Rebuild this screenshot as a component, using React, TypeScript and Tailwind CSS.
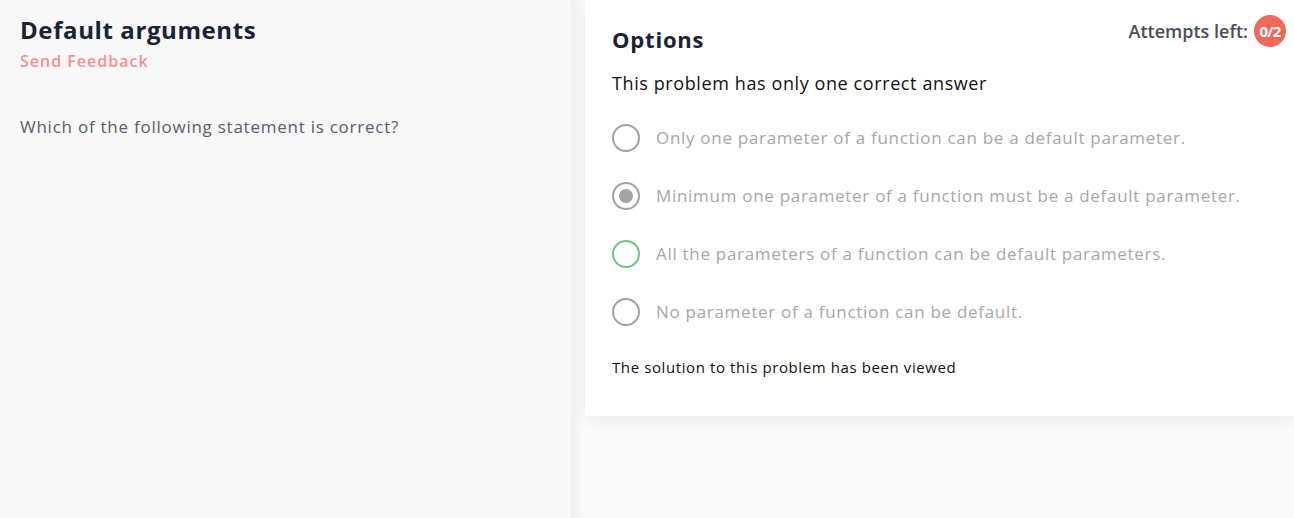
import React from "react";

const options = [
  { text: "Only one parameter of a function can be a default parameter.", state: "none" },
  { text: "Minimum one parameter of a function must be a default parameter.", state: "selected" },
  { text: "All the parameters of a function can be default parameters.", state: "correct" },
  { text: "No parameter of a function can be default.", state: "none" },
];

function Radio({ state }: { state: string }) {
  const ring = state === "correct" ? "border-[#6cc48a]" : "border-[#a3a3a3]";
  return (
    <span className={`w-[28px] h-[28px] rounded-full border-2 ${ring} flex items-center justify-center shrink-0 bg-white`}>
      {state === "selected" && <span className="w-[14px] h-[14px] rounded-full bg-[#a3a3a3]" />}
    </span>
  );
}

export default function App() {
  return (
    <div className="w-[1294px] h-[518px] flex overflow-hidden" style={{ fontFamily: "'Open Sans', Lato, sans-serif" }}>
      {/* question panel */}
      <div className="w-[571px] h-full bg-[#f8f8f8] px-5 pt-[14px]">
        <h1 className="text-[24px] font-bold text-[#1b2233] leading-[32px] tracking-[0.6px]">Default arguments</h1>
        <div className="text-[16px] font-semibold text-[#f59191] tracking-[1px] mt-[3px]">Send Feedback</div>
        <p className="text-[17px] text-[#5a5f6b] mt-[41px] tracking-[0.75px]">Which of the following statement is correct?</p>
      </div>

      {/* options panel */}
      <div className="flex-1 h-full bg-[#fafafa] pl-[14px] shadow-[inset_10px_0_12px_-6px_rgba(0,0,0,0.06)]">
        <div className="bg-white h-[416px] pl-[27px] pr-2 shadow-[0_4px_14px_rgba(0,0,0,0.06)]">
          <div className="flex items-start justify-between">
            <h2 className="text-[22px] font-bold text-[#1b2233] mt-[25px] leading-[28px] tracking-[0.8px]">Options</h2>
            <div className="flex items-center gap-[6px] mt-[15px]">
              <span className="text-[18px] font-semibold text-[#4a4d58]">Attempts left:</span>
              <span className="w-[32px] h-[32px] rounded-full bg-[#f2695a] text-white text-[15px] font-bold flex items-center justify-center tracking-[-0.8px]">0/2</span>
            </div>
          </div>
          <p className="text-[18px] text-[#111] mt-[17px] leading-[26px] tracking-[0.6px]">This problem has only one correct answer</p>
          <div className="mt-[28px] flex flex-col gap-[30px]">
            {options.map((o) => (
              <div key={o.text} className="flex items-center gap-4 h-[28px]">
                <Radio state={o.state} />
                <span className="text-[17px] text-[#a8a8a8] tracking-[0.7px]">{o.text}</span>
              </div>
            ))}
          </div>
          <p className="text-[15px] text-[#111] mt-[30px] tracking-[0.6px]">The solution to this problem has been viewed</p>
        </div>
      </div>
    </div>
  );
}
